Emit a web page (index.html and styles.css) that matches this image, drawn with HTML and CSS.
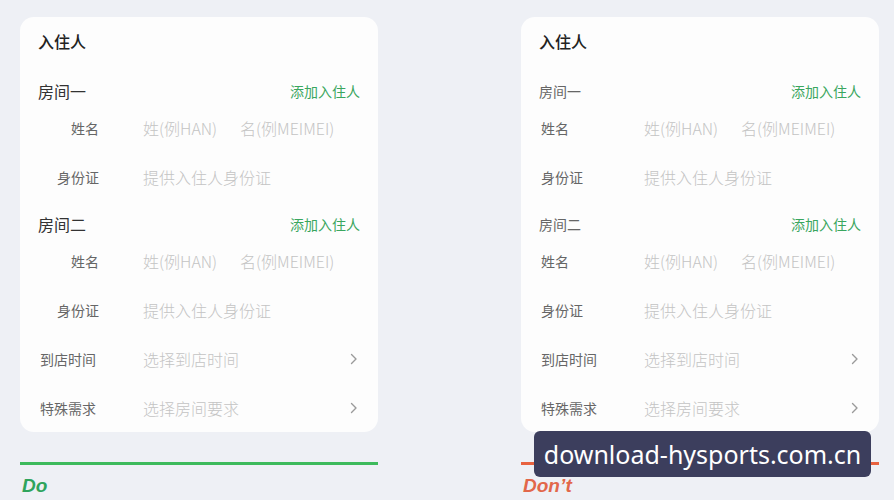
FILE: index.html
```html
<!DOCTYPE html>
<html lang="zh-CN">
<head>
    <meta charset="UTF-8">
    <meta name="viewport" content="width=device-width, initial-scale=1">
    <title>入住人 - Do / Don't</title>
    <link rel="stylesheet" href="styles.css">
</head>
<body>
    <div class="compare">
        <!-- Do: rooms stand out, fields indented under each room -->
        <section class="panel">
            <div class="card">
                <div class="card-title">入住人</div>
                <div class="room-head strong">
                    <span>房间一</span>
                    <a class="add-link">添加入住人</a>
                </div>
                <div class="row indent">
                    <span class="label">姓名</span>
                    <span class="value"><span class="first">姓(例HAN)</span><span>名(例MEIMEI)</span></span>
                </div>
                <div class="row indent">
                    <span class="label">身份证</span>
                    <span class="value">提供入住人身份证</span>
                </div>
                <div class="room-head strong">
                    <span>房间二</span>
                    <a class="add-link">添加入住人</a>
                </div>
                <div class="row indent">
                    <span class="label">姓名</span>
                    <span class="value"><span class="first">姓(例HAN)</span><span>名(例MEIMEI)</span></span>
                </div>
                <div class="row indent">
                    <span class="label">身份证</span>
                    <span class="value">提供入住人身份证</span>
                </div>
                <div class="row">
                    <span class="label">到店时间</span>
                    <span class="value">选择到店时间</span>
                    <svg class="chevron" viewBox="0 0 8 12"><polyline points="1.5,1.5 6,6 1.5,10.5"/></svg>
                </div>
                <div class="row">
                    <span class="label">特殊需求</span>
                    <span class="value">选择房间要求</span>
                    <svg class="chevron" viewBox="0 0 8 12"><polyline points="1.5,1.5 6,6 1.5,10.5"/></svg>
                </div>
            </div>
            <div class="verdict do">Do</div>
        </section>

        <!-- Don't: everything on one level -->
        <section class="panel">
            <div class="card">
                <div class="card-title">入住人</div>
                <div class="room-head">
                    <span>房间一</span>
                    <a class="add-link">添加入住人</a>
                </div>
                <div class="row">
                    <span class="label">姓名</span>
                    <span class="value"><span class="first">姓(例HAN)</span><span>名(例MEIMEI)</span></span>
                </div>
                <div class="row">
                    <span class="label">身份证</span>
                    <span class="value">提供入住人身份证</span>
                </div>
                <div class="room-head">
                    <span>房间二</span>
                    <a class="add-link">添加入住人</a>
                </div>
                <div class="row">
                    <span class="label">姓名</span>
                    <span class="value"><span class="first">姓(例HAN)</span><span>名(例MEIMEI)</span></span>
                </div>
                <div class="row">
                    <span class="label">身份证</span>
                    <span class="value">提供入住人身份证</span>
                </div>
                <div class="row">
                    <span class="label">到店时间</span>
                    <span class="value">选择到店时间</span>
                    <svg class="chevron" viewBox="0 0 8 12"><polyline points="1.5,1.5 6,6 1.5,10.5"/></svg>
                </div>
                <div class="row">
                    <span class="label">特殊需求</span>
                    <span class="value">选择房间要求</span>
                    <svg class="chevron" viewBox="0 0 8 12"><polyline points="1.5,1.5 6,6 1.5,10.5"/></svg>
                </div>
            </div>
            <div class="verdict dont">Don’t</div>
        </section>
    </div>

    <div class="watermark">download-hysports.com.cn</div>
</body>
</html>
```

FILE: styles.css
```css
body {
    margin: 0;
    background: #eef0f5;
    font-family: "Noto Sans CJK SC", "Noto Sans", sans-serif;
    color: #333;
    position: relative;
    height: 500px;
    overflow: hidden;
}
.compare {
    display: flex;
    gap: 143px;
    padding: 17px 0 0 20px;
}
.panel {
    width: 358px;
    flex-shrink: 0;
    display: flex;
    flex-direction: column;
}
.card {
    background: #fdfdfd;
    border-radius: 14px;
    padding: 14px 18px 0;
    height: 401px;
}
.card-title {
    font-size: 16px;
    line-height: 21px;
    font-weight: 500;
    color: #222;
    margin-bottom: 16px;
}
.room-head {
    display: flex;
    justify-content: space-between;
    align-items: center;
    height: 21px;
    padding: 12px 0 2px;
    font-size: 14px;
    color: #666;
}
.room-head.strong {
    font-size: 16px;
    color: #333;
}
.add-link {
    font-size: 14px;
    color: #3aa65e;
}
.row {
    display: flex;
    align-items: center;
    height: 49px;
    font-size: 14px;
}
.label {
    width: 61px;
    margin-right: 44px;
    color: #666;
    flex-shrink: 0;
    padding-left: 2px;
    box-sizing: border-box;
}
.row.indent .label {
    text-align: right;
    padding-left: 0;
}
.value {
    flex: 1;
    color: #c4c4c4;
    font-size: 16px;
    font-weight: 300;
    display: flex;
}
.value .first {
    width: 97px;
}
.chevron {
    width: 8px;
    height: 12px;
    margin-right: 2px;
    fill: none;
    stroke: #9a9a9a;
    stroke-width: 1.4;
    stroke-linecap: round;
    stroke-linejoin: round;
}
.verdict {
    border-top: 3px solid;
    margin-top: 30px;
    padding-top: 10px;
    font-family: "Liberation Sans", Arial, sans-serif;
    font-weight: bold;
    font-style: italic;
    font-size: 19px;
    padding-left: 2px;
}
.verdict.do {
    border-color: #3dba5c;
    color: #2fa45c;
}
.verdict.dont {
    border-color: #e8623f;
    color: #e2674a;
}
.watermark {
    position: absolute;
    left: 534px;
    top: 431px;
    width: 337px;
    height: 46px;
    background: #3c3e5d;
    border-radius: 6px;
    color: #fff;
    font-family: "Noto Sans", sans-serif;
    font-size: 25px;
    line-height: 46px;
    text-align: center;
}
```
